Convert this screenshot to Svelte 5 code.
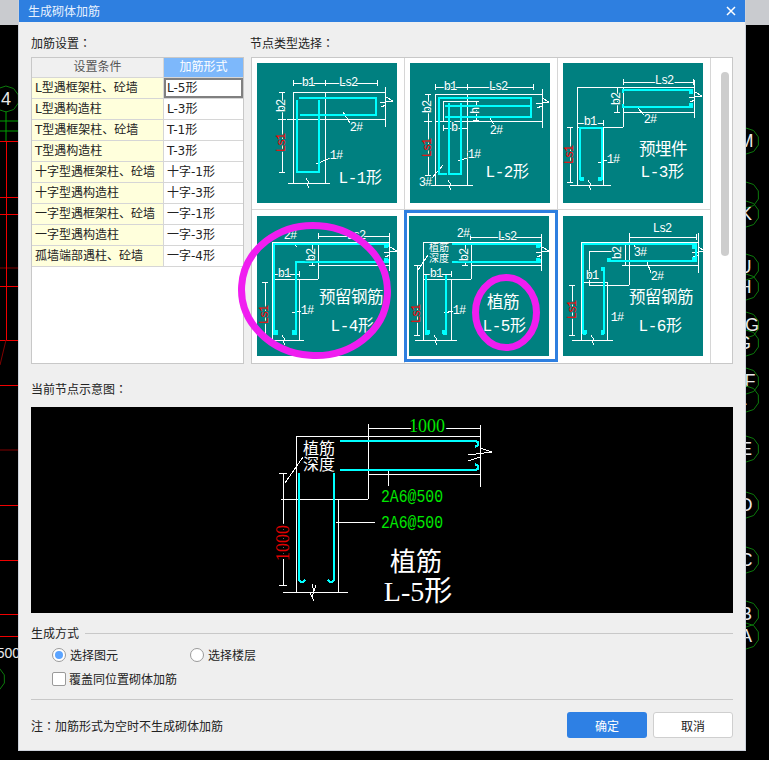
<script>
  const dh = (a, b, y) => `M${a} ${y}H${b}M${a} ${y - 3}v6M${b} ${y - 3}v6`;
  const dv = (x, a, b) => `M${x} ${a}V${b}M${x - 3} ${a}h6M${x - 3} ${b}h6`;
  const bk = (x, y) => `M${x - 2} ${y - 5}L${x + 1} ${y}L${x - 1} ${y + 1}L${x + 1} ${y + 5}`;
  const br = (x, y) => `M${x - 6} ${y + 1}L${x + 7} ${y - 1}L${x} ${y - 5}M${x - 5} ${y + 5}L${x} ${y + 3}`;

  const rows = [
    ['L型遇框架柱、砼墙', 'L-5形'],
    ['L型遇构造柱', 'L-3形'],
    ['T型遇框架柱、砼墙', 'T-1形'],
    ['T型遇构造柱', 'T-3形'],
    ['十字型遇框架柱、砼墙', '十字-1形'],
    ['十字型遇构造柱', '十字-3形'],
    ['一字型遇框架柱、砼墙', '一字-1形'],
    ['一字型遇构造柱', '一字-3形'],
    ['孤墙端部遇柱、砼墙', '一字-4形']
  ];

  // text entries: x, y, string, size, rotated?, kind
  const tiles = [
    {
      w: dh(36, 120, 20) + 'M68 17v6M36 29H128M36 29V120M68 29V120M30 56H128M128 24V64M31 120H73' + bk(51, 120) + br(129, 39) +
        dv(25, 29, 109) + 'M21 56h8M86 49L93 60M59 101L73 95',
      c: 'M42 35H119V52H43M62 37V109H40V37',
      h: '',
      t: [[51, 20, 'b1', 12], [91, 20, 'Ls2', 12], [25, 43, 'b2', 12, 1], [25, 80, 'Ls1', 12, 1, 'red'], [99, 65, '2#', 12], [79, 93, '1#', 12], [103, 116, 'L-1形', 16, 0, 'big']]
    },
    {
      w: dh(25, 123, 24) + 'M57 21v6M25 31H132M25 31V122M57 31V122M25 58H132M132 26V65M33 38H66M33 38V58M10 122H63' + bk(40, 122) + br(132, 40) +
        dv(18, 31, 112) + 'M14 58h8' + dh(33, 57, 65) + dv(66, 38, 57) + 'M80 55L84 62M48 98L60 94M33 102L22 115',
      c: 'M37 111H29V35H121V42M35 43H121V54H35M39 40V111H51V40',
      h: '',
      t: [[40, 24, 'b1', 12], [88, 24, 'Ls2', 12], [18, 44, 'b2', 12, 1], [18, 85, 'Ls1', 12, 1, 'red'], [44, 65, 'b', 12], [66, 48, 'h', 12, 1], [86, 68, '2#', 12], [64, 92, '1#', 12], [15, 120, '3#', 12], [97, 110, 'L-2形', 16, 0, 'big']]
    },
    {
      w: dh(60, 130, 19) + 'M14 24H131M60 24V64M14 64H60M14 24V122M40 64V122M7 122H48M131 17V55M60 49H131' + br(132, 34) + bk(27, 122) +
        dv(54, 24, 49) + dh(14, 40, 60) + dv(7, 64, 119) + 'M74 44L81 52M35 100L44 97',
      c: 'M129 30V27H60V30M60 41V44H129V41M17 117V65H39V117M17 117h3M39 117h-3',
      h: 'M17 116h4M35 116h4M126 29h4M126 42h4',
      t: [[101, 18, 'Ls2', 12], [54, 36, 'b2', 12, 1], [27, 59, 'b1', 12], [7, 92, 'Ls1', 12, 1, 'red'], [87, 57, '2#', 12], [50, 97, '1#', 12], [100, 87, '预埋件', 16.5, 0, 'big'], [99, 110, 'L-3形', 16, 0, 'big']]
    },
    {
      w: dh(61, 132, 20) + 'M15 26H132M15 26V124M42 63V124M15 63H61M61 26V63M61 49H132M132 19V55M10 124H47' + bk(27, 124) + br(133, 36) +
        dv(55, 26, 49) + dh(15, 42, 58) + dv(8, 66, 120) + 'M36 26L40 31M35 97L44 95',
      c: 'M131 31V28H17V118H21M131 43V46H39V118H35',
      h: 'M17 116h4M35 116h4M127 30h4M127 44h4',
      t: [[33, 20, '2#', 12], [99, 20, 'Ls2', 12], [55, 39, 'b2', 12, 1], [27, 58, 'b1', 12], [8, 99, 'Ls1', 12, 1, 'red'], [50, 95, '1#', 12], [94, 82, '预留钢筋', 16.5, 0, 'big'], [95, 111, 'L-4形', 16, 0, 'big']]
    },
    {
      w: dh(61, 132, 21) + 'M14 26H132M14 26V124M42 63V124M14 63H62M62 26V63M62 49H132M132 19V55M6 124H48' + bk(27, 124) + br(133, 36) +
        dv(56, 26, 49) + dh(14, 42, 58) + dv(8, 49, 119) + 'M19 39L9 54M35 97L44 95',
      c: 'M43 28H131V31M43 46H131V43M17 59V118H20M37 59V118H34',
      h: 'M17 116h4M33 116h4M127 30h4M127 44h4',
      t: [[54, 18, '2#', 12], [98, 21, 'Ls2', 12], [30, 32, '植筋', 10, 0, 'w'], [30, 43, '深度', 10, 0, 'w'], [56, 39, 'b2', 12, 1], [27, 58, 'b1', 12], [8, 98, 'Ls1', 12, 1, 'red'], [50, 95, '1#', 12], [94, 87, '植筋', 16.5, 0, 'big'], [95, 111, 'L-5形', 16, 0, 'big']]
    },
    {
      w: dh(66, 133, 21) + 'M18 26H135M18 26V124M44 66V124M18 66H44M66 17V69M26 69H66M26 35V69M26 35H49M135 17V57M60 49H135M9 124H50' + bk(30, 124) + br(135, 36) +
        dv(62, 26, 49) + dv(9, 69, 119) + 'M70 28L74 33M84 46L88 57',
      c: 'M20 118V28H133V45H44M41 118V52M20 118h3M41 118h-3',
      h: 'M20 116h4M38 116h4M44 44h4M129 31h4M129 43h4M38 53h4',
      t: [[99, 13, 'Ls2', 12], [55, 37, 'b2', 12, 1], [29, 60, 'b1', 12], [10, 94, 'Ls1', 12, 1, 'red'], [77, 37, '3#', 12], [94, 61, '2#', 12], [54, 102, '1#', 12], [98, 82, '预留钢筋', 16.5, 0, 'big'], [97, 111, 'L-6形', 16, 0, 'big']]
    }
  ];

  const poly = (cx, cy, r) =>
    Array.from({ length: 10 }, (_, i) => {
      const a = (i * Math.PI) / 5 + 0.31;
      return `${(cx + r * Math.cos(a)).toFixed(1)},${(cy + r * Math.sin(a)).toFixed(1)}`;
    }).join(' ');

  const axes = [
    [746, 141, 746, 'M'], [746, 195, 746, ''], [746, 214, 746, 'K'], [746, 267, 745, 'U'], [746, 287, 745, 'H'],
    [746, 325, 752, 'G'], [746, 343, 744, 'G'], [746, 381, 750, 'F'], [746, 399, 742, 'L'], [746, 449, 746, 'E'],
    [746, 505, 746, 'D'], [746, 560, 746, 'C'], [746, 614, 746, 'B'], [746, 636, 746, 'A'], [6, 99, 6, '4'], [-8, 679, 0, '']
  ];
  const reds = [141, 197, 214, 286, 340, 385, 505, 560, 614, 636];
</script>

<div class="desk">
  <div class="topstrip"></div>
  <svg class="cad" width="769" height="760" viewBox="0 0 769 760">
    <path class="gl" d="M0 121H19M0 131H19M6 111V141" />
    {#each reds as y}<path class="rl" d="M0 {y}H19" />{/each}
    <path class="rd" d="M0 268H19M0 450H19M6 340L0 365" />
    <path class="rl" d="M6 141V340" />
    {#each axes as [x, y, tx, s]}
      <polygon class="hex" points={poly(x, y, 13)} />
      {#if s}<text class="axis" x={tx} y={y + 6}>{s}</text>{/if}
    {/each}
    <text class="axis end" x="20" y="658">500</text>
  </svg>

  <div class="dialog">
    <header class="title">
      <span>生成砌体加筋</span>
      <svg class="close" width="10" height="10" viewBox="0 0 10 10"><path d="M1 1L9 9M9 1L1 9" /></svg>
    </header>

    <main class="body">
      <section class="top">
        <div class="leftcol">
          <div class="label">加筋设置<span class="colon">：</span></div>
          <div class="table">
            <div class="row head">
              <div class="c1">设置条件</div>
              <div class="c2">加筋形式</div>
            </div>
            {#each rows as [a, b], i}
              <div class="row">
                <div class="c1">{a}</div>
                <div class="c2" class:sel={i === 0}>{b}</div>
              </div>
            {/each}
          </div>
        </div>

        <div class="rightcol">
          <div class="label shift">节点类型选择<span class="colon">：</span></div>
          <div class="gallery">
            <div class="grid">
              {#each tiles as t, i}
                <div class="cell" class:active={i === 4}>
                  <svg class="tile" width="140" height="140" viewBox="0 0 140 140">
                    <path class="wl" d={t.w} />
                    <path class="cy thick" d={t.c} />
                    <path class="blk" d={t.h} />
                    {#each t.t as [x, y, s, size, rot, kind]}
                      <text
                        class="tt {kind || 'w'}"
                        class:halo={size === 12}
                        x={x}
                        y={y}
                        font-size={size}
                        transform={rot ? `rotate(-90 ${x} ${y})` : undefined}>{s}</text>
                    {/each}
                  </svg>
                </div>
              {/each}
            </div>
            <div class="track"><div class="thumb"></div></div>
          </div>
        </div>
      </section>

      <div class="label prev">当前节点示意图<span class="colon">：</span></div>
      <svg class="preview" width="702" height="206" viewBox="0 0 702 206">
        <path class="wl" d="M265 29H449M265 29V185M307 92V185M250 92H337M337 17V92M337 67H449M449 19V80M252 185H317M337 21H449M337 18v6M449 18v6M357 63V79M305 115H344M272 50L254 76M252 66V178M248 66h8M248 178h8" />
        <path class="wl" d="M281 177L283 185L279 186L283 194M285 178L281 190M437 48L461 45L449 41M437 54L449 50" />
        <path class="cy" d="M309 34H444L447 35V38L444 40M309 63H444L447 62V59L444 57M268 66V173L270 175H272L274 173M303 66V173L301 175H299L297 173" />
        <text class="pv green halo" x="396" y="19" font-size="18">1000</text>
        <text class="pv darkred halo" x="252" y="136" font-size="18" transform="rotate(-90 252 136)">1000</text>
        <text class="pv w" x="288" y="41" font-size="16">植筋</text>
        <text class="pv w" x="288" y="57" font-size="16">深度</text>
        <text class="pv green mono" x="381" y="90" font-size="18" textLength="62" lengthAdjust="spacingAndGlyphs">2A6@500</text>
        <text class="pv green mono" x="381" y="116" font-size="18" textLength="62" lengthAdjust="spacingAndGlyphs">2A6@500</text>
        <text class="pv w" x="385" y="155" font-size="26">植筋</text>
        <text class="pv w" x="387" y="184" font-size="28">L-5形</text>
      </svg>

      <div class="legend"><span>生成方式</span><i></i></div>
      <div class="radios">
        <label class="radio"><b class="dot on"></b>选择图元</label>
        <label class="radio second"><b class="dot"></b>选择楼层</label>
      </div>
      <label class="check"><b class="box"></b>覆盖同位置砌体加筋</label>
      <div class="rule"></div>
      <footer class="foot">
        <span>注<span class="colon">：</span>加筋形式为空时不生成砌体加筋</span>
        <div class="btns">
          <button class="ok">确定</button>
          <button class="cancel">取消</button>
        </div>
      </footer>
    </main>

    <svg class="marks" width="726" height="750" viewBox="0 0 726 750">
      <ellipse cx="295.5" cy="290.5" rx="73" ry="65" transform="rotate(4 295.5 290.5)" />
      <ellipse cx="487" cy="312.5" rx="30.5" ry="35" />
    </svg>
  </div>
</div>

<style>
  :global(body) {
    margin: 0;
    background: #000;
    font-family: "Noto Sans CJK SC", "Liberation Sans", sans-serif;
    font-size: 12px;
    color: #222;
  }
  .desk {
    position: relative;
    width: 769px;
    height: 760px;
    overflow: hidden;
    background: #000;
  }
  .topstrip {
    height: 25px;
    background: #c9cbcf;
  }
  .cad {
    position: absolute;
    left: 0;
    top: 0;
  }
  .gl {
    stroke: #00a000;
    fill: none;
  }
  .rl {
    stroke: #f00000;
    fill: none;
    shape-rendering: crispEdges;
  }
  .rd {
    stroke: #800000;
    fill: none;
  }
  .hex {
    fill: none;
    stroke: #0c7a0c;
  }
  .axis {
    fill: #e8e8e8;
    font-family: "Liberation Sans", sans-serif;
    font-size: 18px;
    text-anchor: middle;
  }
  .axis.end {
    text-anchor: end;
    font-size: 14px;
  }
  .dialog {
    position: absolute;
    left: 19px;
    top: 0;
    width: 726px;
    height: 750px;
    background: #efefef;
    display: flex;
    flex-direction: column;
    box-shadow: 0 0 0 1px #ccd1da;
  }
  .title {
    height: 22px;
    flex: none;
    background: #2e7fe0;
    color: #e8f2ff;
    display: flex;
    align-items: center;
    justify-content: space-between;
    padding: 0 9px;
    line-height: 18px;
  }
  .close path {
    stroke: #fff;
    stroke-width: 1.5;
    fill: none;
  }
  .body {
    padding: 12px 12px 0;
    display: flex;
    flex-direction: column;
  }
  .top {
    display: flex;
    gap: 7px;
  }
  .leftcol {
    width: 213px;
    flex: none;
  }
  .rightcol {
    flex: 1;
    min-width: 0;
  }
  .label {
    height: 23px;
    line-height: 18px;
  }
  .shift {
    margin-left: -1px;
  }
  .colon {
    font-family: "Noto Sans CJK TC", sans-serif;
  }
  .table {
    height: 307px;
    box-sizing: border-box;
    border: 1px solid #c8c8c8;
    background: #fff;
  }
  .row {
    display: flex;
    height: 21px;
    box-sizing: border-box;
    border-bottom: 1px solid #d6d6d6;
    line-height: 20px;
    color: #222;
    font-family: "DejaVu Sans", "Noto Sans CJK SC", sans-serif;
  }
  .c1 {
    width: 132px;
    flex: none;
    padding-left: 3px;
    box-sizing: border-box;
    background: #ffffdc;
    border-right: 1px solid #d6d6d6;
    white-space: nowrap;
  }
  .c2 {
    flex: 1;
    padding-left: 3px;
    white-space: nowrap;
  }
  .sel {
    outline: 2px solid #808080;
    outline-offset: -2px;
  }
  .head {
    height: 20px;
    line-height: 19px;
  }
  .head .c1 {
    background: #f0f0f0;
    text-align: center;
    color: #555;
    padding: 0;
  }
  .head .c2 {
    background: #7db8fb;
    color: #fff;
    text-align: center;
    padding: 0;
  }
  .gallery {
    height: 307px;
    box-sizing: border-box;
    border: 1px solid #c8c8c8;
    background: #fff;
    display: flex;
    overflow: hidden;
  }
  .grid {
    width: 458px;
    flex: none;
    display: grid;
    grid-template-columns: repeat(3, 153px);
    grid-template-rows: 152px 153px;
    margin-right: -1px;
  }
  .cell {
    box-sizing: border-box;
    border-right: 1px solid #d6d6d6;
    border-bottom: 1px solid #d6d6d6;
    padding: 5px 0 0 5px;
    position: relative;
  }
  .cell:nth-child(n + 4) {
    border-bottom: 0;
    padding-top: 6px;
  }
  .cell.active {
    border: 3px solid #2e7fe0;
    padding: 3px 0 0 2px;
    margin: 0 0 1px -1px;
  }
  .tile {
    display: block;
    background: #008080;
  }
  .track {
    flex: 1;
    padding: 14px 3px 0 12px;
  }
  .thumb {
    width: 8px;
    height: 184px;
    border-radius: 4px;
    background: #cdcdcd;
  }
  .wl {
    fill: none;
    stroke: #fff;
    stroke-width: 1;
    shape-rendering: crispEdges;
  }
  .cy {
    fill: none;
    stroke: #00ffff;
    stroke-width: 2;
    shape-rendering: crispEdges;
  }
  .cy.thick {
    stroke-width: 2.5;
  }
  .blk {
    fill: none;
    stroke: #00ffff;
    stroke-width: 4;
    shape-rendering: crispEdges;
  }
  .tt {
    font-family: "Liberation Mono", "Noto Sans CJK SC", monospace;
    text-anchor: middle;
    dominant-baseline: central;
    fill: #fff;
  }
  .tt.big {
    letter-spacing: -0.5px;
  }
  .tt.halo {
    stroke: #008080;
    stroke-width: 2px;
    paint-order: stroke;
    letter-spacing: -1px;
  }
  .tt.red {
    fill: #ff0000;
  }
  .pv {
    font-family: "Liberation Serif", "Noto Sans CJK SC", serif;
    text-anchor: middle;
    dominant-baseline: central;
  }
  .pv.mono {
    font-family: "Liberation Mono", monospace;
  }
  .pv.halo {
    stroke: #000;
    stroke-width: 4px;
    paint-order: stroke;
  }
  .pv.w {
    fill: #fff;
  }
  .pv.green {
    fill: #00e800;
  }
  .pv.darkred {
    fill: #e00000;
  }
  .prev {
    margin-top: 16px;
    height: 27px;
  }
  .preview {
    display: block;
    background: #000;
  }
  .legend {
    margin-top: 11px;
    height: 18px;
    line-height: 18px;
    display: flex;
    align-items: center;
    gap: 6px;
  }
  .legend i {
    flex: 1;
    height: 1px;
    background: #c8c8c8;
  }
  .radios {
    display: flex;
    margin: 4px 0 0 21px;
    height: 18px;
  }
  .radio {
    display: flex;
    align-items: center;
    gap: 4px;
    line-height: 18px;
    width: 138px;
  }
  .dot {
    width: 14px;
    height: 14px;
    box-sizing: border-box;
    border: 1px solid #9a9a9a;
    border-radius: 50%;
    background: #fff;
    display: flex;
    align-items: center;
    justify-content: center;
  }
  .dot.on::after {
    content: "";
    width: 8px;
    height: 8px;
    border-radius: 50%;
    background: #5ba4ff;
  }
  .check {
    display: flex;
    align-items: center;
    gap: 3px;
    margin: 6px 0 0 21px;
    height: 18px;
    line-height: 18px;
  }
  .box {
    width: 14px;
    height: 14px;
    box-sizing: border-box;
    border: 1px solid #9a9a9a;
    border-radius: 2px;
    background: #fff;
  }
  .rule {
    height: 1px;
    background: #c8c8c8;
    margin-top: 11px;
  }
  .foot {
    display: flex;
    align-items: center;
    justify-content: space-between;
    margin-top: 12px;
    height: 26px;
  }
  .btns {
    display: flex;
    gap: 6px;
  }
  .btns button {
    width: 80px;
    height: 26px;
    border-radius: 3px;
    font: inherit;
    padding: 0;
  }
  .ok {
    background: #2e80e4;
    color: #fff;
    border: 0;
  }
  .cancel {
    background: #fff;
    color: #222;
    border: 1px solid #cfcfcf;
  }
  .marks {
    position: absolute;
    left: 0;
    top: 0;
    overflow: visible;
    pointer-events: none;
  }
  .marks ellipse {
    fill: none;
    stroke: #f01df0;
    stroke-width: 7;
  }
</style>
